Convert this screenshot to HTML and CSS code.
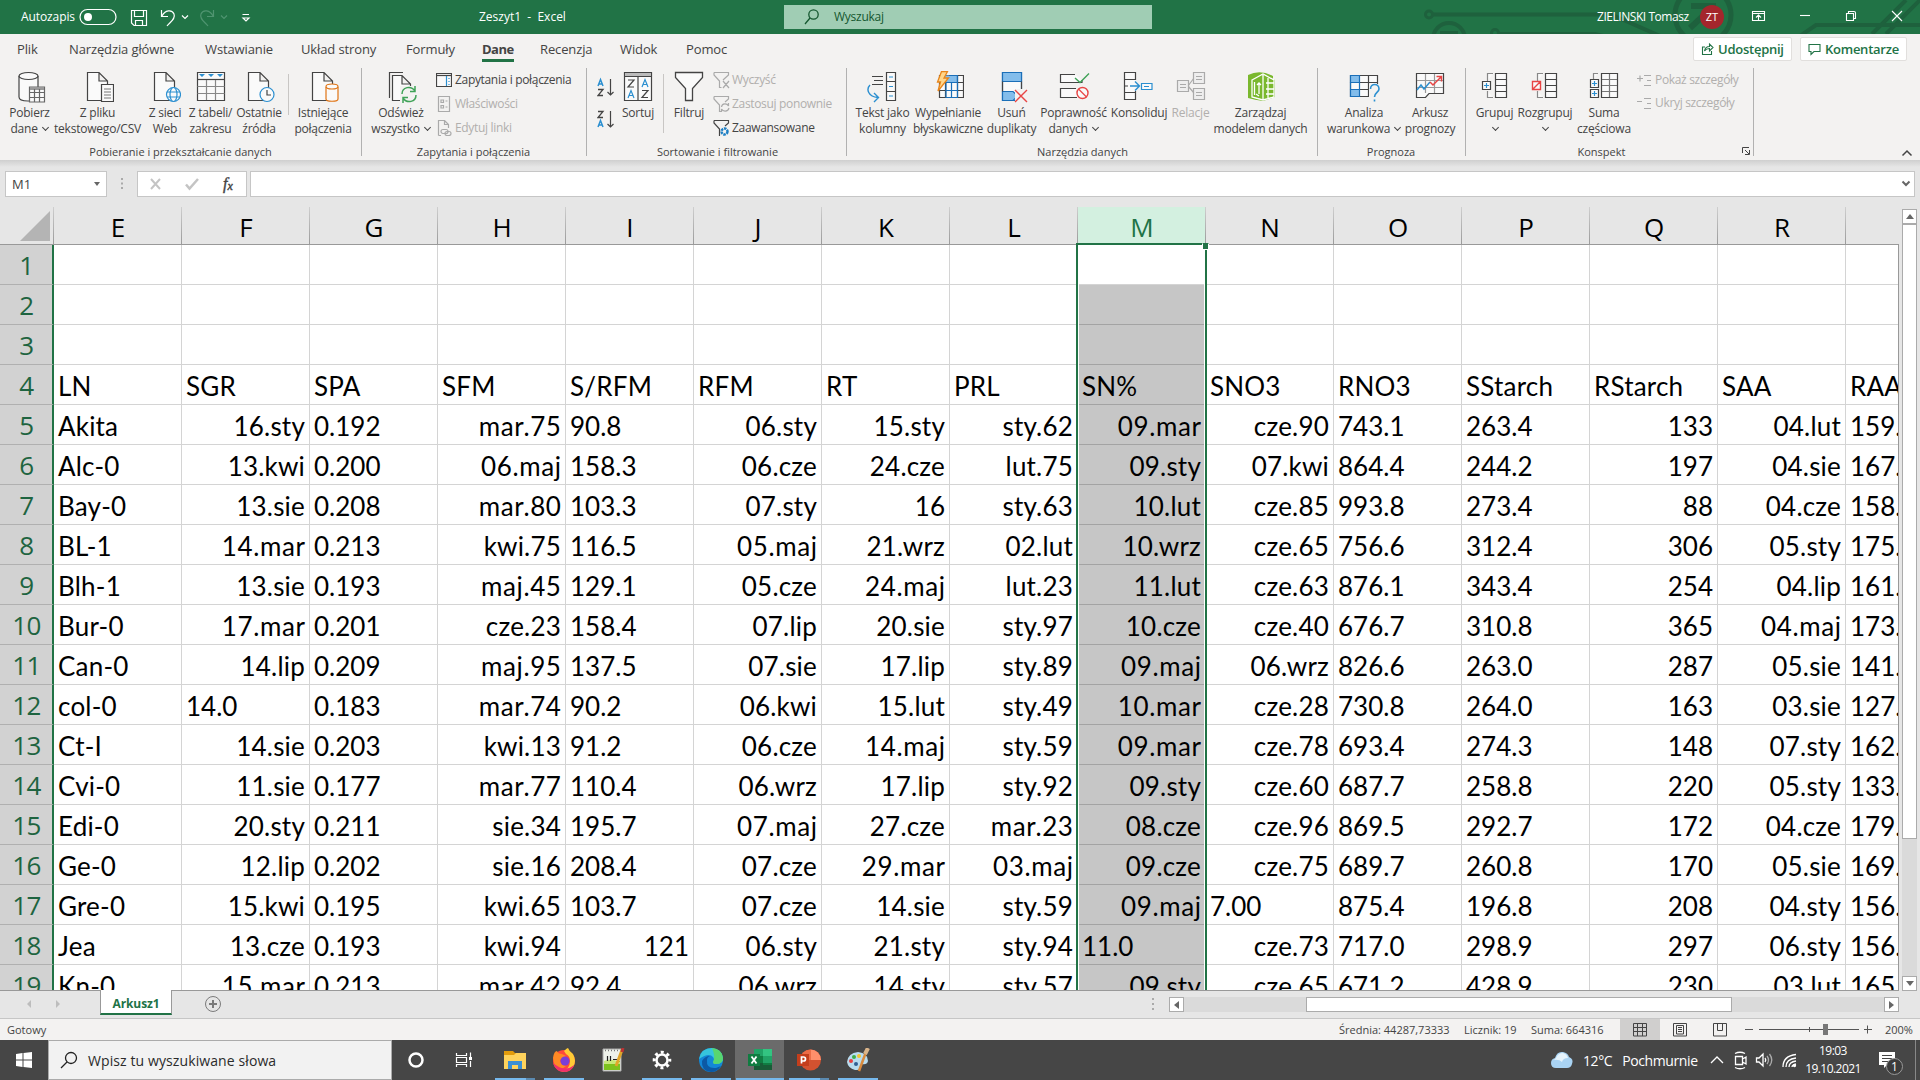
FILE: index.html
```html
<!DOCTYPE html>
<html lang="pl">
<head>
<meta charset="utf-8">
<title>Zeszyt1 - Excel</title>
<link rel="stylesheet" href="styles.css">
</head>
<body>
<header class="titlebar">
  <svg class="circuit" width="500" height="34" fill="none" stroke="#1e613d" stroke-width="4">
    <circle cx="9" cy="14.500" r="3.500" stroke-width="3"/><path d="M13 14.500H185"/>
    <circle cx="29" cy="39" r="16"/><path d="M20 33H38"/>
    <circle cx="75" cy="33" r="3.500" stroke-width="3"/><path d="M79 34H175L200 40M190 14L240 36"/>
    <circle cx="283" cy="15" r="28" stroke-width="5"/><path d="M271 6H296M270 28L294 6" stroke-width="6"/>
    <path d="M380 36L396 25H500M452 34L486 0M466 34L500 0"/>
  </svg>
  <div class="quick">
    <span class="autosave">Autozapis</span>
    <svg class="toggle" width="38" height="18" fill="none" stroke="#fff" stroke-width="1.200"><rect x="1" y="1.500" width="36" height="15" rx="7.500"/><circle cx="9" cy="9" r="4" fill="#fff" stroke="none"/></svg>
    <svg width="130" height="24" fill="none" stroke="#fff" stroke-width="1.200">
      <path d="M1.500 5.500H16.500V20.500H4L1.500 18ZM4.500 5.500V11.500H13.500V5.500M5.500 20V15.500H12.500V20"/>
      <path d="M31.500 5V11.500H38M32 11C35 5 42 4 44 9C46 14 40 17 37 21"/><path d="M52 10.500L55 13.500L58 10.500"/>
      <g stroke="#4f9470"><path d="M83.500 5V11.500H77M83 11C80 5 73 4 71 9C69 14 75 17 78 21"/><path d="M91 10.500L94 13.500L97 10.500"/></g>
      <path d="M112.500 9.500H119M113 13L116 16L119 13Z"/>
    </svg>
  </div>
  <div class="doc-name">Zeszyt1&nbsp; -&nbsp; Excel</div>
  <div class="search">
    <svg width="16" height="18" fill="none" stroke="#14572f" stroke-width="1.300"><circle cx="9.500" cy="6.500" r="4.700"/><path d="M6 10L1 16"/></svg>
    <span>Wyszukaj</span>
  </div>
  <div class="user">ZIELINSKI Tomasz</div>
  <div class="avatar">ZT</div>
  <svg class="window-buttons" width="160" height="34" fill="none" stroke="#fff" stroke-width="1.100">
    <path d="M4.500 11.500H16.500V20.500H4.500ZM4.500 13.500H16.500M10.500 20V15M8 17.500L10.500 15L13 17.500"/>
    <path d="M52 15.500H62"/>
    <path d="M98.500 13.500H105.500V20.500H98.500ZM100.500 13V11.500H106Q107.500 11.500 107.500 13V18.500H106"/>
    <path d="M144 11L154 21M154 11L144 21"/>
  </svg>
</header>

<nav class="tabs">
  <div class="tab-list">
    <span>Plik</span><span>Narzędzia główne</span><span>Wstawianie</span><span>Układ strony</span><span>Formuły</span><span class="active">Dane</span><span>Recenzja</span><span>Widok</span><span>Pomoc</span>
  </div>
  <div class="pill share"><svg width="13" height="14" fill="none" stroke="#217346" stroke-width="1.100"><path d="M4 5H1.500V12.500H10.500V9M3.500 9C4 6 6 4.500 8.500 4.500V2L12 5.500L8.500 9V6.500C6 6.500 4.500 7.500 3.500 9Z"/></svg>Udostępnij</div>
  <div class="pill"><svg width="13" height="14" fill="none" stroke="#217346" stroke-width="1.100"><path d="M1 2.500H12V9.500H6L3 12.500V9.500H1Z"/></svg>Komentarze</div>
</nav>

<section class="ribbon">
  <div class="group g1">
    <div class="tools">
      <div class="tool w45"><svg width="32" height="32" fill="#fafafa" stroke="#444" stroke-width="1.200"><path d="M5 5V26C5 29 10 30 14 30H24V5"/><ellipse cx="14.500" cy="5" rx="9.500" ry="3.500"/><path d="M15.500 16H30.500V31H15.500Z" stroke="#666"/><path d="M16 17.500H30" stroke="#999" stroke-width="3"/><path d="M16 21.500H30M16 26.500H30M20.500 18V31M25.500 18V31" stroke="#666"/></svg><span>Pobierz</span><span>dane <i class="chev"></i></span></div>
      <div class="tool w91"><svg width="32" height="32" fill="#fafafa" stroke="#444" stroke-width="1.200"><path d="M5.500 1.500H17L25.500 10V29.500H5.500ZM17 1.500V10H25"/><path d="M19.500 13.500H31.500V30.500H19.500Z"/><path d="M22 18H29M22 21H29M22 24H29M22 27H29" stroke="#777"/></svg><span>Z pliku</span><span>tekstowego/CSV</span></div>
      <div class="tool w44"><svg width="32" height="32" fill="#fafafa" stroke="#444" stroke-width="1.200"><path d="M5.500 1.500H17L25.500 10V29.500H5.500ZM17 1.500V10H25"/><g stroke="#2b8fd0"><circle cx="24.500" cy="23.500" r="7"/><ellipse cx="24.500" cy="23.500" rx="3.500" ry="7"/><path d="M18 21H31M18 26H31" /></g></svg><span>Z sieci</span><span>Web</span></div>
      <div class="tool w47"><svg width="32" height="32" fill="#fafafa" stroke="#444" stroke-width="1.200"><path d="M2.500 1.500H29.500V29.500H2.500Z"/><path d="M2.500 8.500H29.500"/><path d="M2.500 15.500H29.500M2.500 22.500H29.500M11.500 9V29M20.500 9V29" stroke="#888"/><path d="M4 3H10L7 6ZM13 3H19L16 6ZM22 3H28L25 6Z" fill="#2b8fd0" stroke="none"/></svg><span>Z tabeli/</span><span>zakresu</span></div>
      <div class="tool w50"><svg width="32" height="32" fill="#fafafa" stroke="#444" stroke-width="1.200"><path d="M5.500 1.500H17L25.500 10V29.500H5.500ZM17 1.500V10H25"/><circle cx="24" cy="23.500" r="7" stroke="#2b8fd0"/><path d="M24 19V24H28" fill="none"/></svg><span>Ostatnie</span><span>źródła</span></div>
      <div class="divider"></div>
      <div class="tool w60"><svg width="32" height="32" fill="#fafafa" stroke="#444" stroke-width="1.200"><path d="M5.500 1.500H17L25.500 10V29.500H5.500ZM17 1.500V10H25"/><g stroke="#e07414"><path d="M19 16V28C19 31 31 31 31 28V16"/><ellipse cx="25" cy="15.500" rx="6" ry="2.500"/></g></svg><span>Istniejące</span><span>połączenia</span></div>
    </div>
    <div class="caption">Pobieranie i przekształcanie danych</div>
  </div>
  <div class="group g2">
    <div class="tools">
      <div class="tool w66"><svg width="32" height="32" fill="#fafafa" stroke="#444" stroke-width="1.200"><path d="M5 26.500H4.500V1.500H18" fill="none"/><path d="M7.500 4.500H17L25.500 13V29.500H7.500ZM17 4.500V13H25"/><path d="M15 15H32V32H15Z" fill="#f3f2f1" stroke="none"/><g fill="none" stroke="#3fa257" stroke-width="1.500"><path d="M17 23C17 16 26 14 30 20M30 15V20.500H25M31 24C31 31 22 33 18 27M18 32V26.500H23"/></g></svg><span>Odśwież</span><span>wszystko <i class="chev"></i></span></div>
      <div class="list">
        <div><svg width="16" height="16" fill="#fafafa" stroke="#444" stroke-width="1.200"><path d="M.5 1.500H15.500V14.500H.5Z"/><path d="M.5 3.500H15.500"/><path d="M10.500 4V14" stroke="#2b8fd0"/><path d="M13 6V7M13 9V10M13 12V13" stroke="#2b8fd0"/></svg>Zapytania i połączenia</div>
        <div class="off"><svg width="16" height="16" fill="none" stroke="#aaa" stroke-width="1.200"><path d="M2.500 .5H13.500V15.500H2.500Z"/><path d="M5 4H7.500V6.500H5ZM5 9.500H7.500V12H5ZM9.500 5H11.500M9.500 11H11.500"/></svg>Właściwości</div>
        <div class="off"><svg width="16" height="16" fill="none" stroke="#aaa" stroke-width="1.200"><path d="M2.500 15.500V.5H8.500L12.500 4.500V8M8.500 .5V4.500H12.500M2.500 15.500H5"/><rect x="5" y="9.500" width="7" height="4" rx="2"/><rect x="9" y="11.500" width="6" height="4" rx="2"/></svg>Edytuj linki</div>
      </div>
    </div>
    <div class="caption">Zapytania i połączenia</div>
  </div>
  <div class="group g3">
    <div class="tools">
      <svg class="az" width="18" height="70" fill="none" stroke="#444" stroke-width="1.200">
        <path d="M13.500 8V24M10.500 21L13.500 24L16.500 21M13.500 40V56M10.500 53L13.500 56L16.500 53"/>
        <path d="M1 15L3.500 8.500L6 15M2 13H5M1 56L3.500 49.500L6 56M2 54H5" stroke="#2b8fd0" stroke-width="1.500"/>
        <path d="M1 18.500H6L1 24.500H6M1 40.500H6L1 46.500H6" stroke-width="1.300"/>
      </svg>
      <div class="tool w40"><svg width="32" height="32" fill="#fafafa" stroke="#444" stroke-width="1.200"><path d="M2.500 1.500H29.500V29.500H2.500Z"/><path d="M3 3.500H29" stroke="#bbb" stroke-width="3"/><path d="M2.500 5.500H29.500M16 6V29"/><g fill="none"><path d="M6 9H12L6 16H12M20 19.500H26L20 26.500H26"/><path d="M6 27L9 19.500L12 27M7 24.500H11M20 16L23 8.500L26 16M21 13.500H25" stroke="#2b8fd0"/></g></svg><span>Sortuj</span></div>
      <div class="divider tall"></div>
      <div class="tool w40"><svg width="32" height="32" fill="#fafafa" stroke="#444" stroke-width="1.300"><path d="M2.500 1.500H29.500V6.500L19.500 17.500V29.500H12.500V17.500L2.500 6.500Z"/></svg><span>Filtruj</span></div>
      <div class="list l3">
        <div class="off"><svg width="17" height="18" fill="none" stroke="#aaa" stroke-width="1.200"><path d="M1 1.500H15.500V4L10 9M1 1.500V4L6.500 10V16.500H8.500M10 10L16 17M16 10L10 17"/></svg>Wyczyść</div>
        <div class="off"><svg width="17" height="18" fill="none" stroke="#aaa" stroke-width="1.200"><path d="M1 1.500H15.500V4L12 7M1 1.500V4L6.500 10V16.500H8M8.500 12C9 8 14 8 15.500 11V8M16 13C15 17 10 17 8.500 14V17"/></svg>Zastosuj ponownie</div>
        <div><svg width="17" height="18" fill="none" stroke="#444" stroke-width="1.200"><path d="M1 1.500H15.500V4L12 7M1 1.500V4L6.500 10V16.500H7"/><circle cx="11.500" cy="12.500" r="3" stroke="#1e7fc4" stroke-width="2.500" stroke-dasharray="2.500 .8"/></svg>Zaawansowane</div>
      </div>
    </div>
    <div class="caption">Sortowanie i filtrowanie</div>
  </div>
  <div class="group g4">
    <div class="tools">
      <div class="tool w55"><svg width="32" height="32" fill="none" stroke="#444" stroke-width="1.200"><path d="M5 5.500H16M7 9.500H16M5 13.500H16"/><path d="M19.500 1.500H28.500V29.500H19.500ZM19.500 10.500H28.500M19.500 20.500H28.500" fill="#fafafa"/><path d="M22 6H26M22 15.500H26M22 25H26" stroke="#2b8fd0"/><path d="M3 14C-1 18 1 26 11 26.500M7 22L11.500 26.500L7 31" stroke="#2b8fd0" stroke-width="1.400"/></svg><span>Tekst jako</span><span>kolumny</span></div>
      <div class="tool w76"><svg width="32" height="32" fill="#fafafa" stroke="#444" stroke-width="1.200"><path d="M7.500 4.500H31.500V26.500H7.500Z"/><path d="M12 4.500H25V12H12Z" fill="#83bdeb" stroke="none"/><path d="M8 11.500H31M8 19.500H31M13.500 12V26M25.500 4.500V26"/><path d="M14 12V26.500H25.500V4.500H17M14 11.500H25M14 19.500H25M19.500 12V26" stroke="#1b6fb8" fill="none"/><path d="M9.500 .5H15.500L12 7H16.500L6 20L8.500 11H5.500Z" fill="#ffd68a" stroke="#e8851a" stroke-width="1.300"/></svg><span>Wypełnianie</span><span>błyskawiczne</span></div>
      <div class="tool w51"><svg width="32" height="32" fill="#fafafa" stroke="#1b6fb8" stroke-width="1.200"><path d="M6.500 1.500H25.500V29.500H6.500Z"/><path d="M6.500 1.500H25.500V10.500H6.500ZM6.500 20.500H17L22 25L17 29.500H6.500Z" fill="#83bdeb"/><path d="M6.500 10.500V20.500M25.500 10.500V19" stroke="#444"/><path d="M19 18H32V32H19Z" fill="#f3f2f1" stroke="none"/><path d="M19 19L31 31M31 19L19 31" stroke="#e84545" stroke-width="1.400"/></svg><span>Usuń</span><span>duplikaty</span></div>
      <div class="tool w73"><svg width="32" height="32" fill="#fafafa" stroke="#444" stroke-width="1.200"><path d="M17 3.500H2.500V11.500H24V9M18 17.500H2.500V26.500H19"/><path d="M17 7L22 11.500L31 2.500" stroke="#3fa257" fill="none" stroke-width="1.400"/><circle cx="24.500" cy="22" r="5.500" stroke="#e84545" stroke-width="1.400"/><path d="M20.500 18L28.500 26" stroke="#e84545"/></svg><span>Poprawność</span><span>danych <i class="chev"></i></span></div>
      <div class="tool w58"><svg width="32" height="32" fill="#fafafa" stroke="#444" stroke-width="1.200"><path d="M12.500 9V1.500H1.500V28.500H12.500V20M1.500 8.500H12.500M1.500 21.500H12.500M1.500 15H5"/><path d="M7 15H16M12 10.500L16.500 15L12 19.500" stroke="#2b8fd0" fill="none" stroke-width="1.400"/><path d="M18.500 12.500H29V18.500H18.500ZM21 15.500H26" stroke="#2b8fd0"/></svg><span>Konsoliduj</span></div>
      <div class="tool w45 off"><svg width="32" height="32" fill="#eee" stroke="#aaa" stroke-width="1.200"><path d="M13 15L19 7M13 15L19 22"/><path d="M2.500 9.500H13.500V20.500H2.500ZM18.500 1.500H29.500V12.500H18.500ZM18.500 17.500H29.500V28.500H18.500Z"/><path d="M5 13.500H11M5 16.500H11M21 5.500H27M21 8.500H27M21 21.500H27M21 24.500H27"/></svg><span>Relacje</span></div>
      <div class="tool w95"><svg width="32" height="32" fill="none" stroke="#fff" stroke-width="1.300"><path d="M3 4Q15 -2 28 5V8L30 9V26L18 30Q10 29 3 27Z" fill="#7ab82e" stroke="none"/><path d="M7 9L18 3L29 9V26L18 29L7 26ZM18 4V29M21 12H29M21 18H29M21 23H29M23 7V28"/><path d="M9.500 11V24M14 12V23M12 14L14 12L16 14M11 23L14 25"/></svg><span>Zarządzaj</span><span>modelem danych</span></div>
    </div>
    <div class="caption">Narzędzia danych</div>
  </div>
  <div class="group g5">
    <div class="tools">
      <div class="tool w80"><svg width="32" height="32" fill="#fafafa" stroke="#444" stroke-width="1.200"><path d="M2.500 4.500H29.500V25.500H2.500ZM20.500 4.500V25M2.500 11.500H29.500M2.500 18.500H29.500"/><path d="M2.500 4.500H11.500V11.500H2.500ZM2.500 18.500H11.500V25.500H2.500Z" fill="#83bdeb" stroke="#1b6fb8"/><path d="M2.500 11.500V18.500M11.500 11.500V18.500" stroke="#1b6fb8"/><path d="M21 13H32V32H21Z" fill="#f3f2f1" stroke="none"/><path d="M22.500 18C22.500 12 31 12 31 18C31 21.500 26.500 21.500 26.500 26M26.500 28.500V30.500" stroke="#2b8fd0" fill="none" stroke-width="1.600"/></svg><span>Analiza</span><span>warunkowa <i class="chev"></i></span></div>
      <div class="tool w52"><svg width="32" height="32" fill="#fafafa" stroke="#444" stroke-width="1.200"><path d="M2.500 2.500H29.500V22.500H15L11.500 26.500H2.500Z"/><path d="M3 9.500H29M3 16.500H29M11.500 3V22M20.500 3V22" stroke="#999"/><path d="M3 19L7 14L10 18L16 11" stroke="#2b8fd0" fill="none" stroke-width="1.500"/><path d="M16 11L19 14L27 6M22.500 5.500H27.500V10.500" stroke="#e84545" fill="none" stroke-width="1.500"/></svg><span>Arkusz</span><span>prognozy</span></div>
    </div>
    <div class="caption">Prognoza</div>
  </div>
  <div class="group g6">
    <div class="tools">
      <div class="tool w47"><svg width="32" height="32" fill="#fafafa" stroke="#444" stroke-width="1.200"><path d="M14 2.500H8.500V10M8.500 20V26.500H14" stroke="#888"/><path d="M3.500 10.500H11.500V18.500H3.500ZM16.500 2.500H27.500V26.500H16.500ZM16.500 8.500H27.500M16.500 14.500H27.500M16.500 20.500H27.500"/><path d="M5 14.500H10M7.500 12V17" stroke="#2b8fd0"/></svg><span>Grupuj</span><span><i class="chev"></i></span></div>
      <div class="tool w54"><svg width="32" height="32" fill="#fafafa" stroke="#444" stroke-width="1.200"><path d="M14 2.500H8.500V10M8.500 20V26.500H14" stroke="#888"/><path d="M16.500 2.500H27.500V26.500H16.500ZM16.500 8.500H27.500M16.500 14.500H27.500M16.500 20.500H27.500"/><path d="M3.500 10.500H11.500V18.500H3.500ZM3.500 18.500L11.500 10.500" stroke="#e84545" stroke-width="1.400"/></svg><span>Rozgrupuj</span><span><i class="chev"></i></span></div>
      <div class="tool w64"><svg width="32" height="32" fill="#fafafa" stroke="#444" stroke-width="1.200"><path d="M10 2.500H5.500V8" stroke="#888"/><path d="M2.500 8.500H10.500V16.500H2.500ZM2.500 18.500H10.500V26.500H2.500ZM13.500 2.500H29.500V26.500H13.500Z"/><path d="M21.500 3V26M14 8.500H29M14 14.500H29M14 20.500H29" stroke="#777"/><path d="M4 12.500H9M6.500 10V15M4 22.500H9M6.500 20V25" stroke="#2b8fd0"/></svg><span>Suma</span><span>częściowa</span></div>
      <div class="list l6">
        <div class="off"><svg width="15" height="14" fill="none" stroke="#aaa" stroke-width="1.200"><path d="M0 5.500H6M3 2.500V8.500M7 2.500H14M10 7.500H14M7 12.500H14"/></svg>Pokaż szczegóły</div>
        <div class="off"><svg width="15" height="14" fill="none" stroke="#aaa" stroke-width="1.200"><path d="M0 5.500H5M7 2.500H14M10 7.500H14M7 12.500H14"/></svg>Ukryj szczegóły</div>
      </div>
    </div>
    <div class="caption">Konspekt</div>
    <svg class="launcher" width="10" height="10" fill="none" stroke="#444"><path d="M1.500 7V1.500H8M4 4L8 8M8.500 4V8.500H4"/></svg>
  </div>
  <svg class="collapse" width="12" height="8" fill="none" stroke="#444" stroke-width="1.500"><path d="M1.500 6.500L6 2L10.500 6.500"/></svg>
</section>

<section class="formula">
  <div class="namebox">M1<i class="caret"></i></div>
  <svg width="5" height="14" fill="#aaa"><path d="M1 1H3V3H1ZM1 5.500H3V7.500H1ZM1 10H3V12H1Z"/></svg>
  <div class="fx">
    <svg width="60" height="16" fill="none"><path d="M4 3L13 13M13 3L4 13" stroke="#c4c4c4" stroke-width="2"/><path d="M39 8.500L42.500 12.500L51 3" stroke="#c4c4c4" stroke-width="2.500"/></svg>
    <em>f<sub>x</sub></em>
  </div>
  <div class="entry"><svg width="10" height="8" fill="none" stroke="#666" stroke-width="2"><path d="M1.500 1.500L5 5L8.500 1.500"/></svg></div>
</section>

<main class="workspace">
  <div class="sheet" id="sheet">
    <div class="heads" id="heads"><div class="corner"><svg width="30" height="30"><path d="M30 0V30H0Z" fill="#b4b4b4"/></svg></div></div>
    <div class="rows" id="rows"></div>
    <div class="selection"></div>
    <div class="handle"></div>
  </div>
  <div class="vscroll">
    <div class="sbtn"><svg width="8" height="5"><path d="M0 5L4 0L8 5Z" fill="#666"/></svg></div>
    <div class="vthumb"></div>
    <div class="sbtn"><svg width="8" height="5"><path d="M0 0L4 5L8 0Z" fill="#666"/></svg></div>
  </div>
</main>

<section class="sheetbar">
  <svg class="nav" width="36" height="10" fill="#bdbdbd"><path d="M5 1V9L1 5ZM30 1V9L34 5Z"/></svg>
  <div class="sheet-tab">Arkusz1</div>
  <svg class="plus" width="18" height="18" fill="none" stroke="#7b7b7b"><circle cx="9" cy="9" r="7.500"/><path d="M9 5V13M5 9H13" stroke-width="2"/></svg>
  <svg class="grip" width="3" height="14" fill="#aaa"><path d="M0 1H2V3H0ZM0 6H2V8H0ZM0 11H2V13H0Z"/></svg>
  <div class="hscroll">
    <div class="sbtn"><svg width="5" height="8"><path d="M5 0L0 4L5 8Z" fill="#666"/></svg></div>
    <div class="hthumb"></div>
    <div class="sbtn"><svg width="5" height="8"><path d="M0 0L5 4L0 8Z" fill="#666"/></svg></div>
  </div>
</section>

<footer class="status">
  <span class="ready">Gotowy</span>
  <span class="stat s1">Średnia: 44287,73333</span><span class="stat s2">Licznik: 19</span><span class="stat s3">Suma: 664316</span>
  <div class="view on"><svg width="14" height="14" fill="none" stroke="#444"><path d="M.5 .5H13.500V13H.5ZM.5 4.500H13.500M.5 8.500H13.500M4.500 .5V13M9.500 .5V13"/></svg></div>
  <div class="view"><svg width="14" height="14" fill="none" stroke="#444"><path d="M.5 .5H13.500V13H.5ZM3.500 2.500H10.500V11H3.500ZM5 4.500H9M5 6.500H9M5 8.500H9"/></svg></div>
  <div class="view"><svg width="14" height="14" fill="none" stroke="#444"><path d="M.5 .5H13.500V13H.5ZM4.500 .5V7.500H9.500V.5"/></svg></div>
  <svg class="zoombar" width="132" height="20" fill="none" stroke="#555"><path d="M5 9.500H13M19 9.500H119M69.500 7V12M124 9.500H132M127.500 5.500V13.500"/><path d="M83 4H88V15H83Z" fill="#777" stroke="none"/></svg>
  <span class="percent">200%</span>
</footer>

<div class="taskbar">
  <svg class="start" width="48" height="40" fill="#fff"><path d="M16 14L22.500 13V19.500H16ZM23.500 12.900L32 12V19.500H23.500ZM16 20.500H22.500V27L16 26ZM23.500 20.500H32V28L23.500 27.100Z"/></svg>
  <div class="tsearch"><svg width="18" height="18" fill="none" stroke="#222" stroke-width="1.300"><circle cx="11" cy="7" r="5.500"/><path d="M7 11L1 17"/></svg><span>Wpisz tu wyszukiwane słowa</span></div>
  <div class="app first-app"><svg width="24" height="24" fill="none" stroke="#fff" stroke-width="2.500"><circle cx="12" cy="12" r="6.500"/></svg></div>
  <div class="app view-app"><svg width="20" height="24" fill="none" stroke="#fff" stroke-width="1.200"><path d="M3.500 5V7.500H13.500V5M3.500 19V16.500H13.500V19M3.500 9.500H13.500V14.500H3.500ZM17.500 4.500V9M17.500 13V19"/><path d="M16 9H19V12H16Z" fill="#fff" stroke="none"/></svg></div>
  <div class="app run split"><svg width="24" height="24"><path d="M1 3H10L12 5H22V21H1Z" fill="#e39c0c"/><path d="M1 7H11L13 5H23V21H1Z" fill="#ffd35c"/><path d="M5 21V13H19V21H15V17H9V21Z" fill="#3b8fd4"/></svg></div>
  <div class="app run"><svg width="24" height="24"><circle cx="12" cy="13" r="11" fill="#ff4a3a"/><path d="M12 3Q15 0 16 0Q17 3 21 6Q25 13 21 19Q16 25 9 23Q18 22 18 13Q18 8 14 6Z" fill="#ffcb36"/><path d="M1 10Q2 3 5 3Q6 6 10 6L14 8L8 12Q8 17 14 18Q9 23 3 19Z" fill="#ff8a24"/><circle cx="13" cy="13" r="4.500" fill="#7a3fd6"/><path d="M1 15Q4 24 13 24Q20 23 22 17Q13 25 1 15" fill="#f0306c"/></svg></div>
  <div class="app"><svg width="24" height="24"><path d="M2 1H20V23H2Z" fill="#eef2ea" stroke="#aaa"/><path d="M3 13H19V22H3Z" fill="#7cc21e"/><path d="M3 13Q10 10 19 14V16H3Z" fill="#c6e87a"/><path d="M6.500 8V13M9.500 8V13M12 11.500H16" stroke="#222" stroke-width="1.200"/><path d="M21 2L15 18" stroke="#e0a52a" stroke-width="3"/><path d="M22 0L21 4" stroke="#b33" stroke-width="3"/><path d="M4 2.500H18" stroke="#777" stroke-dasharray="1 2" stroke-width="1.500"/></svg></div>
  <div class="app run"><svg width="24" height="24" fill="none" stroke="#fff"><circle cx="12" cy="12" r="5.500" stroke-width="2.500"/><circle cx="12" cy="12" r="7.800" stroke-width="3" stroke-dasharray="3 3.126" stroke-dashoffset="1.500"/></svg></div>
  <div class="app run"><svg width="24" height="24"><circle cx="12" cy="12" r="12" fill="#1387d6"/><path d="M0 11Q2 0 13 0Q23 1 24 10Q24 16 17 16Q14 16 14 14Q16 12 14 9Q10 4 0 11" fill="#36c5dc"/><path d="M13 0Q23 1 24 10Q24 16 17 16Q14 16 14 14Q17 9 13 0" fill="#58d66f"/><path d="M8 12Q7 21 17 20L22 18Q18 24 12 24Q2 23 3 13Q6 8 11 8Q8 9 8 12" fill="#0c59a4"/></svg></div>
  <div class="app run here"><svg width="24" height="24"><path d="M6 1H24V22H6Z" fill="#21a366"/><path d="M15 1H24V8H15Z" fill="#33c481"/><path d="M6 8H15V15H6Z" fill="#107c41"/><path d="M6 15H24V22H6Z" fill="#185c37"/><path d="M15 15H24V17H15Z" fill="#107c41"/><path d="M0 6H12V18H0Z" fill="#107c41"/><path d="M3.500 8.500L8.500 15.500M8.500 8.500L3.500 15.500" stroke="#fff" stroke-width="1.800"/></svg></div>
  <div class="app run split"><svg width="24" height="24"><circle cx="13.500" cy="12" r="10.500" fill="#d35230"/><path d="M13.500 1.500A10.500 10.500 0 0 1 24 12H13.500Z" fill="#ff8f6b"/><path d="M13.500 1.500A10.500 10.500 0 0 0 3 12H13.500Z" fill="#ed6c47"/><path d="M0 6H12V18H0Z" fill="#c43e1c"/><path d="M4.500 15.500V9H6.500Q8.500 9 8.500 11T6.500 13H4.500" fill="none" stroke="#fff" stroke-width="1.700"/></svg></div>
  <div class="app run"><svg width="24" height="24"><path d="M1 14Q2 5 12 4Q22 5 22 13Q21 17 16 16Q14 17 15 20Q14 22 9 22Q2 20 1 14" fill="#b8dcef"/><circle cx="5" cy="13" r="2" fill="#e84040"/><circle cx="8" cy="9" r="2" fill="#3fae49"/><circle cx="13" cy="8" r="2" fill="#f4c430"/><circle cx="10" cy="16" r="2" fill="#2e5f93"/><path d="M20 4L13 23" stroke="#d98a3d" stroke-width="2.500"/><path d="M22 0L19 6" stroke="#d9b48a" stroke-width="4"/></svg></div>
  <div class="tray">
    <svg width="24" height="20"><path d="M6 18Q1 18 1 13Q1 9 5 8Q7 1 13 2Q18 3 19 7Q24 9 22 14Q21 18 17 18Z" fill="#a9d3f3"/><path d="M6 8Q8 3 13 3Q17 4 18 8Q13 8 12 12Q9 9 4 10Z" fill="#e5f3fc"/></svg>
    <span class="temp">12°C<span>Pochmurnie</span></span>
    <svg class="tray-icons" width="96" height="24" fill="none" stroke="#fff" stroke-width="1.300">
      <path d="M3 15L9 9L15 15"/>
      <path d="M27.500 8.500H34.500V16.500H27.500ZM34.500 11L38 9V16L34.500 14M27 5.500Q32 3 37 5.500M27 19.500Q32 22 37 19.500"/>
      <path d="M48.500 10H51L55 6V18L51 14H48.500ZM57 10Q58.500 12 57 14"/><path d="M59 8Q62 12 59 16M61.500 6Q66 12 61.500 18" stroke="#aaa"/>
      <path d="M75 19Q75 8 88 6.500M78 19Q78 11 88 10M81 19Q81 14 88 13M84 19Q84 17 88 16"/><circle cx="86.500" cy="17.500" r="1" fill="#fff"/>
    </svg>
    <div class="clock"><span>19:03</span><span>19.10.2021</span></div>
    <div class="notice"><svg width="18" height="18"><path d="M1 1H17V14H9L6 17V14H1Z" fill="#fff"/><path d="M4 4.500H14M4 7.500H14M4 10.500H11" stroke="#444"/></svg><b>1</b></div>
    <i class="peek"></i>
  </div>
</div>
<script src="sheet.js"></script>
</body>
</html>
```
FILE: styles.css
```css
* { box-sizing: border-box; }
body {
  margin: 0;
  width: 1920px;
  height: 1080px;
  overflow: hidden;
  display: flex;
  flex-direction: column;
  background: #e6e6e6;
  color: #444;
  font: 12px/16px "Open Sans", "Noto Sans", sans-serif;
}
svg { display: block; flex: none; }
i { font-style: normal; }

.titlebar {
  position: relative;
  height: 34px;
  background: #217346;
  color: #fff;
  display: grid;
  grid-template-columns: 479px 305px 368px 445px 103px 48px 172px;
  align-items: center;
}
.circuit { position: absolute; left: 1420px; top: 0; }
.quick { display: flex; align-items: center; padding-left: 21px; }
.autosave { width: 58px; letter-spacing: -.1px; white-space: nowrap; }
.toggle { margin-right: 13px; }
.search {
  height: 24px;
  background: #a0cdb4;
  color: #14572f;
  display: flex;
  align-items: center;
  gap: 14px;
  padding-left: 20px;
  letter-spacing: -.25px;
}
.user { grid-column: 5; letter-spacing: -.45px; white-space: nowrap; z-index: 1; }
.avatar { width: 24px; height: 24px; border-radius: 50%; background: #a4262c; line-height: 24px; text-align: center; font-size: 11px; z-index: 1; }
.window-buttons { z-index: 1; }

.tabs { height: 34px; background: #f3f2f1; display: flex; padding: 3px 13px 0 17px; }
.tab-list { flex: 1; display: grid; grid-template-columns: 52px 136px 96px 105px 76px 58px 80px 66px 60px; font-size: 13px; line-height: 25px; letter-spacing: -.12px; white-space: nowrap; }
.tab-list .active { font-weight: 700; width: 32px; height: 25px; border-bottom: 3px solid #217346; line-height: 25px; letter-spacing: -.5px; }
.pill {
  width: 107px;
  height: 24px;
  background: #fff;
  border: 1px solid #e1dfdd;
  border-radius: 2px;
  display: flex;
  align-items: center;
  gap: 4px;
  padding-left: 7px;
  color: #217346;
  font-size: 13px;
  font-weight: 600;
  letter-spacing: -.25px;
}
.share { width: 99px; margin-right: 8px; }

.ribbon { position: relative; height: 92px; background: #f3f2f1; display: flex; letter-spacing: -.22px; }
.group { position: relative; height: 88px; border-right: 1px solid #b1b1b1; display: flex; flex-direction: column; justify-content: space-between; }
.g1 { width: 362px; padding-left: 7px; }
.g2 { width: 225px; padding-left: 6px; }
.g3 { width: 260px; padding-left: 9px; }
.g4 { width: 471px; padding-left: 8px; }
.g5 { width: 148px; padding-left: 6px; }
.g6 { width: 288px; padding-left: 5px; }
.tools { display: flex; align-items: flex-start; }
.tool { padding-top: 3px; display: flex; flex-direction: column; align-items: center; white-space: nowrap; }
.tool svg { margin-bottom: 2px; }
.tool span { height: 16px; }
.w40 { width: 40px; } .w44 { width: 44px; } .w45 { width: 45px; } .w47 { width: 47px; }
.w50 { width: 50px; } .w51 { width: 51px; } .w52 { width: 52px; } .w54 { width: 54px; }
.w55 { width: 55px; } .w58 { width: 58px; } .w60 { width: 60px; } .w64 { width: 64px; }
.w66 { width: 66px; } .w73 { width: 73px; } .w76 { width: 76px; } .w80 { width: 80px; }
.w91 { width: 91px; } .w95 { width: 95px; }
.chev { display: inline-block; width: 5px; height: 5px; border: solid #444; border-width: 0 1.500px 1.500px 0; transform: rotate(45deg); margin: 0 1px 3px 2px; }
.divider { width: 1px; height: 41px; margin: 6px 4px 0; background: #c8c6c4; }
.divider.tall { height: 59px; margin: 6px 5px 0; }
.az { margin: 3px 3px 0 1px; }
.list { padding: 0 0 0 2px; white-space: nowrap; letter-spacing: -.33px; }
.list div { height: 24px; display: flex; align-items: center; gap: 3px; }
.l3 { padding-left: 4px; }
.l3 div { gap: 2px; }
.l6 { padding-left: 1px; }
.l6 div { height: 23px; gap: 3px; }
.off { color: #b1afad; }
.caption { height: 12px; font-size: 11px; line-height: 16px; letter-spacing: 0; text-align: center; margin: 0 7px 0 0; }
.g6 .caption { padding-right: 14px; }
.launcher { position: absolute; right: 2px; bottom: 0; }
.collapse { position: absolute; right: 7px; bottom: 3px; }

.formula {
  height: 47px;
  padding: 11px 0 0 5px;
  display: flex;
  align-items: flex-start;
  background: linear-gradient(#cfcfcf, #e6e6e6 7px);
}
.formula > svg { margin: 6px 12px 0 13px; }
.namebox, .fx, .entry { height: 26px; border: 1px solid #c6c6c6; background: #fff; }
.namebox { width: 102px; display: flex; justify-content: space-between; align-items: center; padding: 0 6px; font-size: 13px; }
.caret { border: 4px solid transparent; border-top-color: #666; border-bottom: 0; border-left-width: 3.500px; border-right-width: 3.500px; }
.formula .fx { width: 110px; display: flex; align-items: center; padding-left: 9px; }
.fx em { font: italic 16px "Liberation Serif", serif; -webkit-text-stroke: .4px #444; margin-left: 16px; }
.fx sub { font-size: 12px; vertical-align: -1px; }
.entry { width: 1665px; margin-left: 3px; display: flex; justify-content: flex-end; align-items: center; padding-right: 3px; }

.workspace { height: 784px; display: flex; }
.sheet { position: relative; width: 1899px; overflow: hidden; display: flex; flex-direction: column; border-bottom: 1px solid #999; margin-right: 4px; }
.heads { height: 38px; flex: none; display: flex; border-bottom: 1px solid #999; }
.corner { width: 53px; flex: none; padding: 4px 0 0 20px; }
.col { width: 128px; flex: none; text-align: center; padding-left: 1px; font-size: 26px; line-height: 41px; height: 37px; color: #000; border-left: 1px solid; border-image: linear-gradient(#d0d0d0, #999) 1; }
.col.picked { background: #d3f0e0; color: #217346; }
.rows { flex: 1; overflow: hidden; border-right: 1px solid #999; }
.row { display: flex; height: 40px; width: 1980px; }
.num { width: 54px; flex: none; background: #d2d2d2; border-right: 2px solid #217346; border-bottom: 1px solid #b0b0b0; color: #1e6440; font-size: 26px; letter-spacing: -.6px; line-height: 41px; text-align: center; padding-left: 1px; }
.cell { width: 128px; flex: none; background: #fff; border-right: 1px solid #d4d4d4; border-bottom: 1px solid #d4d4d4; padding: 0 4px; color: #000; font: 26px/43px "Lato", sans-serif; white-space: nowrap; overflow: hidden; }
.cell.word { letter-spacing: .2px; }
.cell.wide { letter-spacing: .6px; padding-right: 3.500px; }
.cell.r { text-align: right; }
.cell.sel { background: #c6c6c6; border-bottom-color: #a3a3a3; }
.selection { position: absolute; left: 1076px; top: 36px; width: 131px; height: 800px; border: 2px solid #217346; box-shadow: inset 0 0 0 1px #fff; }
.handle { position: absolute; left: 1202px; top: 36px; width: 7px; height: 7px; background: #217346; border: 1px solid #fff; border-top-color: #217346; }

.vscroll { width: 15px; margin-top: 2px; height: 782px; background: #dadada; display: flex; flex-direction: column; margin-left: -1px; }
.sbtn { width: 15px; height: 15px; flex: none; border: 1px solid #ababab; background: #fff; display: flex; align-items: center; justify-content: center; }
.vthumb { height: 615px; background: #fff; border: 1px solid #ababab; margin-bottom: auto; }

.sheetbar { height: 28px; display: flex; border-bottom: 1px solid #c6c6c6; }
.nav { margin: 8px 38px 0 26px; }
.sheet-tab { width: 72px; height: 25px; margin-top: -1px; background: #fff; border: 1px solid #999; border-top: 0; border-bottom: 2px solid #217346; color: #217346; font-weight: 700; line-height: 27px; text-align: center; letter-spacing: -.1px; z-index: 1; }
.plus { margin: 4px 0 0 32px; }
.grip { margin: 6px 0 0 930px; }
.hscroll { width: 730px; height: 15px; margin: 6px 0 0 14px; background: #dadada; display: flex; justify-content: space-between; }
.hthumb { width: 426px; background: #fff; border: 1px solid #ababab; margin: 0 auto 0 122px; }

.status { height: 21px; background: #f3f2f1; display: flex; align-items: center; font-size: 11px; white-space: nowrap; }
.ready { width: 1332px; margin-left: 7px; }
.s1 { width: 125px; } .s2 { width: 67px; } .s3 { width: 89px; }
.view { width: 40px; height: 21px; display: flex; align-items: center; justify-content: center; }
.view.on { background: #d0cfce; }
.percent { margin-left: 13px; }

.taskbar { height: 40px; background: #464646; display: flex; color: #fff; }
.tsearch { width: 344px; background: #f2f2f2; border: 1px solid #ababab; display: flex; align-items: center; gap: 10px; padding-left: 11px; color: #2b2b2b; font-size: 14px; letter-spacing: .1px; }
.tsearch span { padding-top: 2px; }
.app { width: 49px; height: 40px; display: flex; align-items: center; justify-content: center; }
.first-app { width: 48px; }
.view-app { width: 48px; padding-right: 2px; margin-right: 2px; }
.run { background: linear-gradient(#76b9ed, #76b9ed) 50% 100% / 40px 2px no-repeat; }
.run.split { background: linear-gradient(90deg, #76b9ed 31px, #5b8ab0 31px) 50% 100% / 40px 2px no-repeat; }
.run.here { background: linear-gradient(#76b9ed, #76b9ed) 50% 100% / 48px 2px no-repeat, #6b6b6b; }
.tray { margin-left: auto; width: 370px; display: flex; align-items: center; font-size: 14px; white-space: nowrap; }
.temp { width: 125px; margin-left: 9px; padding-top: 2px; display: flex; gap: 10px; letter-spacing: -.4px; }
.clock { width: 62px; margin-left: -2px; display: flex; flex-direction: column; text-align: center; font-size: 12px; letter-spacing: -.55px; line-height: 18px; }
.notice { position: relative; width: 51px; padding-left: 14px; }
.notice b { position: absolute; left: 22px; top: 7px; width: 17px; height: 17px; border: 1px solid #999; border-radius: 50%; background: #3c3c3c; font: 12px/15px "Open Sans", sans-serif; text-align: center; }
.peek { width: 1px; height: 40px; background: #888; }
```
FILE: sheet.js
```js
const columns = "EFGHIJKLMNOPQRS".split("");
const data = [
  "", "", "",
  "LN SGR SPA SFM S/RFM RFM RT PRL SN% SNO3 RNO3 SStarch RStarch SAA RAA",
  "Akita 16.sty 0.192 mar.75 90.8 06.sty 15.sty sty.62 09.mar cze.90 743.1 263.4 133 04.lut 159.",
  "Alc-0 13.kwi 0.200 06.maj 158.3 06.cze 24.cze lut.75 09.sty 07.kwi 864.4 244.2 197 04.sie 167.",
  "Bay-0 13.sie 0.208 mar.80 103.3 07.sty 16 sty.63 10.lut cze.85 993.8 273.4 88 04.cze 158.",
  "BL-1 14.mar 0.213 kwi.75 116.5 05.maj 21.wrz 02.lut 10.wrz cze.65 756.6 312.4 306 05.sty 175.",
  "Blh-1 13.sie 0.193 maj.45 129.1 05.cze 24.maj lut.23 11.lut cze.63 876.1 343.4 254 04.lip 161.",
  "Bur-0 17.mar 0.201 cze.23 158.4 07.lip 20.sie sty.97 10.cze cze.40 676.7 310.8 365 04.maj 173.",
  "Can-0 14.lip 0.209 maj.95 137.5 07.sie 17.lip sty.89 09.maj 06.wrz 826.6 263.0 287 05.sie 141.",
  "col-0 14.0 0.183 mar.74 90.2 06.kwi 15.lut sty.49 10.mar cze.28 730.8 264.0 163 03.sie 127.",
  "Ct-I 14.sie 0.203 kwi.13 91.2 06.cze 14.maj sty.59 09.mar cze.78 693.4 274.3 148 07.sty 162.",
  "Cvi-0 11.sie 0.177 mar.77 110.4 06.wrz 17.lip sty.92 09.sty cze.60 687.7 258.8 220 05.sty 133.",
  "Edi-0 20.sty 0.211 sie.34 195.7 07.maj 27.cze mar.23 08.cze cze.96 869.5 292.7 172 04.cze 179.",
  "Ge-0 12.lip 0.202 sie.16 208.4 07.cze 29.mar 03.maj 09.cze cze.75 689.7 260.8 170 05.sie 169.",
  "Gre-0 15.kwi 0.195 kwi.65 103.7 07.cze 14.sie sty.59 09.maj 7.00 875.4 196.8 208 04.sty 156.",
  "Jea 13.cze 0.193 kwi.94 121 06.sty 21.sty sty.94 11.0 cze.73 717.0 298.9 297 06.sty 156.",
  "Kn-0 15.mar 0.213 mar.42 92.4 06.wrz 14.sty sty.57 09.sty cze.65 671.2 428.9 230 03.lut 165.",
];
// Dates and whole numbers align right; text (including decimals typed with a dot) stays left.
const alignsRight = (v) => /^\d+$/.test(v) || /^(\d\d\.[a-z]{3}|[a-z]{3}\.\d\d)$/.test(v);
const add = (parent, className, text) => {
  const el = document.createElement("div");
  el.className = className;
  el.textContent = text;
  parent.append(el);
  return el;
};
const heads = document.getElementById("heads");
columns.forEach((c) => add(heads, c === "M" ? "col picked" : "col", c === "S" ? "" : c));
const rows = document.getElementById("rows");
data.forEach((line, r) => {
  const row = add(rows, "row", "");
  add(row, "num", r + 1);
  const values = line.split(" ");
  columns.forEach((c, i) => {
    const v = values[i] || "";
    const classes = ["cell"];
    if (/[a-z]/i.test(v)) classes.push("word");
    if (/ma[rj]/.test(v)) classes.push("wide");
    if (alignsRight(v)) classes.push("r");
    if (c === "M" && r > 0) classes.push("sel");
    add(row, classes.join(" "), v);
  });
});
```
